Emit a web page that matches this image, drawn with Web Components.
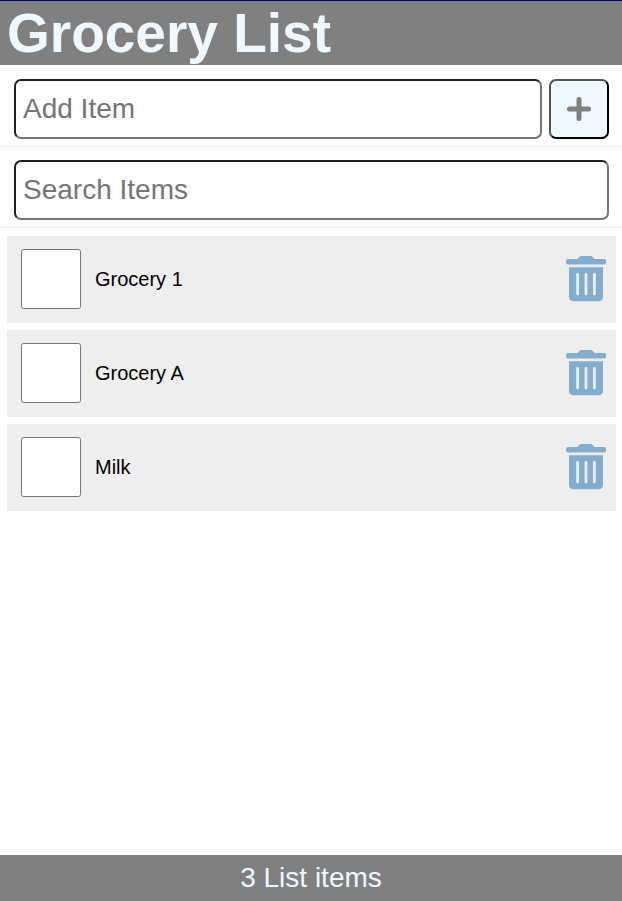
<!DOCTYPE html>
<html lang="en">
<head>
<meta charset="utf-8">
<meta name="viewport" content="width=device-width, initial-scale=1">
<title>Grocery List</title>
<style>
  body { margin: 0; font-family: "Liberation Sans", Arial, sans-serif; font-size: 28px; }
</style>
</head>
<body>
<grocery-app></grocery-app>

<template id="app-template">
  <style>
    :host { display: flex; flex-direction: column; min-height: 100vh; background: #fff; }
    main { flex: 1; }
  </style>
  <app-header>Grocery List</app-header>
  <add-item></add-item>
  <search-item></search-item>
  <main>
    <item-list>
      <list-item>Grocery 1</list-item>
      <list-item>Grocery A</list-item>
      <list-item>Milk</list-item>
    </item-list>
  </main>
  <app-footer>3 List items</app-footer>
</template>

<template id="header-template">
  <style>
    :host { display: block; margin-bottom: 1px; }
    header { border-top: 1px solid navy; background: gray; color: aliceblue; padding: 0 7px; }
    h1 { margin: 0; font-size: 55px; line-height: 64px; }
  </style>
  <header><h1><slot></slot></h1></header>
</template>

<template id="add-template">
  <style>
    :host { display: block; }
    form { display: flex; gap: 7px; padding: 13px 13px 7px 14px; border-bottom: 1px solid #eee; }
    input, button { box-sizing: border-box; height: 60px; border-width: 2px; border-radius: 7px; font: inherit; margin: 0; }
    input { flex: 1; min-width: 0; padding: 0 7px; background: #fff; }
    button { display: grid; place-items: center; width: 60px; padding: 0; border: 2px outset black; background: aliceblue; color: gray; }
    svg { display: block; width: 24px; height: 24px; }
  </style>
  <form>
    <input type="text" placeholder="Add Item" aria-label="Add Item">
    <button type="submit" aria-label="Add Item">
      <svg viewBox="0 0 24 24" fill="none" stroke="currentColor" stroke-width="5" stroke-linecap="round"><path d="M12 2.5v19M2.5 12h19"/></svg>
    </button>
  </form>
</template>

<template id="search-template">
  <style>
    :host { display: block; }
    form { display: flex; padding: 13px 13px 7px 14px; border-bottom: 1px solid #eee; }
    input { box-sizing: border-box; flex: 1; min-width: 0; height: 60px; margin: 0; padding: 0 7px; border-width: 2px; border-radius: 7px; background: #fff; font: inherit; }
  </style>
  <form><input type="text" role="searchbox" placeholder="Search Items" aria-label="Search Items"></form>
</template>

<template id="list-template">
  <style>
    :host { display: block; }
    div { display: flex; flex-direction: column; gap: 7px; padding: 8px 6px 7px 7px; }
  </style>
  <div role="list"><slot></slot></div>
</template>

<template id="item-template">
  <style>
    :host { display: flex; align-items: center; gap: 14px; padding: 13px 10px 14px 14px; background: #eee; }
    input { width: 60px; height: 60px; margin: 0; }
    label { flex: 1; font-size: 20px; color: #000; }
    button { padding: 0; border: 0; background: none; color: #83accd; }
    svg { display: block; width: 40px; height: 46px; }
  </style>
  <input type="checkbox" id="done">
  <label for="done"><slot></slot></label>
  <button type="button" aria-label="Delete item">
    <svg viewBox="0 0 40 46" fill="currentColor">
      <path d="M2 3H11.500L13 1.200Q14 0 15.500 0H24.500Q26 0 27 1.200L28.500 3H38Q40 3 40 5V6.500Q40 8.500 38 8.500H2Q0 8.500 0 6.500V5Q0 3 2 3Z"/>
      <path fill-rule="evenodd" d="M3 11.300H37V40.500Q37 45.200 32.300 45.200H7.700Q3 45.200 3 40.500ZM10.200 18.500V38a1.400 1.400 0 0 0 2.800 0V18.500a1.400 1.400 0 0 0-2.800 0ZM18.600 18.500V38a1.400 1.400 0 0 0 2.800 0V18.500a1.400 1.400 0 0 0-2.800 0ZM27 18.500V38a1.400 1.400 0 0 0 2.800 0V18.500a1.400 1.400 0 0 0-2.800 0Z"/>
    </svg>
  </button>
</template>

<template id="footer-template">
  <style>
    :host { display: block; }
    footer { padding: 7px; background: gray; color: aliceblue; text-align: center; line-height: 32px; }
  </style>
  <footer><slot></slot></footer>
</template>

<script>
  class TemplateElement extends HTMLElement {
    constructor() {
      super();
      const template = document.getElementById(this.constructor.template);
      this.attachShadow({ mode: "open" }).append(template.content.cloneNode(true));
    }
    connectedCallback() {
      const form = this.shadowRoot.querySelector("form");
      if (form) form.addEventListener("submit", (event) => event.preventDefault());
    }
  }
  class AppHeader extends TemplateElement { static template = "header-template"; }
  class AddItem extends TemplateElement { static template = "add-template"; }
  class SearchItem extends TemplateElement { static template = "search-template"; }
  class ItemList extends TemplateElement { static template = "list-template"; }
  class ListItem extends TemplateElement {
    static template = "item-template";
    connectedCallback() { this.setAttribute("role", "listitem"); }
  }
  class AppFooter extends TemplateElement { static template = "footer-template"; }
  class GroceryApp extends TemplateElement { static template = "app-template"; }

  customElements.define("app-header", AppHeader);
  customElements.define("add-item", AddItem);
  customElements.define("search-item", SearchItem);
  customElements.define("item-list", ItemList);
  customElements.define("list-item", ListItem);
  customElements.define("app-footer", AppFooter);
  customElements.define("grocery-app", GroceryApp);
</script>
</body>
</html>
